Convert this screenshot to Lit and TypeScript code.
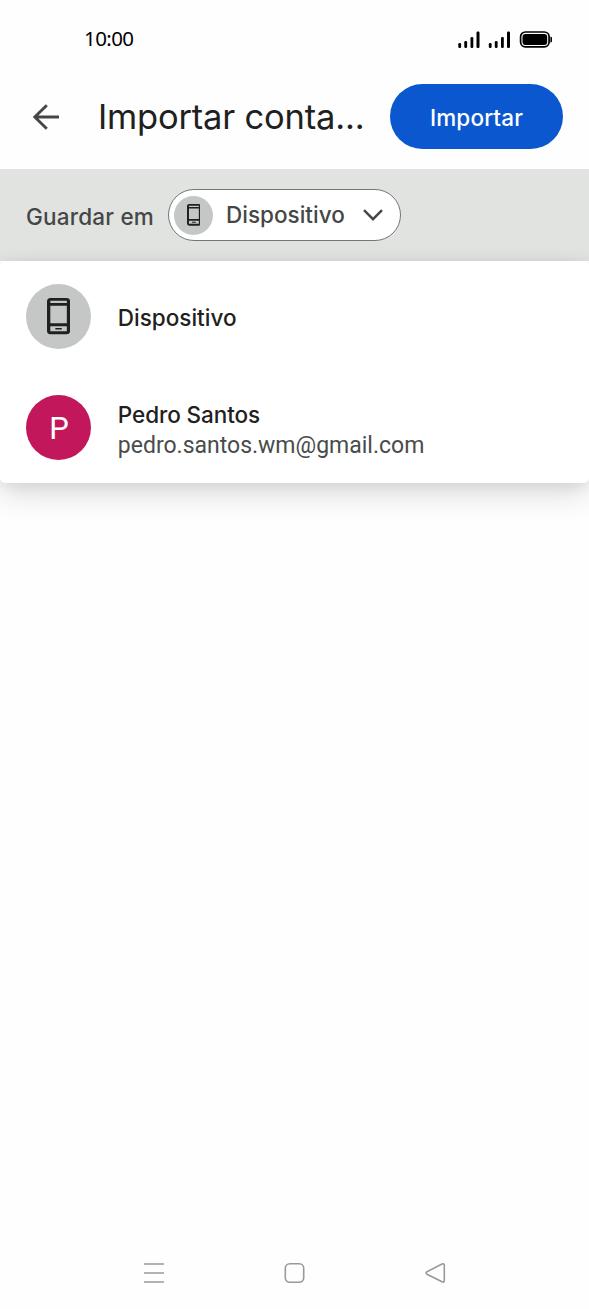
import { LitElement, html, css, svg } from "lit";
import { customElement, property } from "lit/decorators.js";

@customElement("phone-icon")
class PhoneIcon extends LitElement {
  static styles = css`
    :host { display: flex; align-items: center; justify-content: center; border-radius: 50%; background: #c5c7c6; }
    svg { display: block; height: 55.500%; }
  `;
  render() {
    return html`<svg viewBox="0 0 23 36">
      <path fill="#1f2120" fill-rule="evenodd" d="M3.500 0h16a3.500 3.500 0 0 1 3.500 3.500v29a3.500 3.500 0 0 1-3.500 3.500h-16a3.500 3.500 0 0 1-3.500-3.500v-29a3.500 3.500 0 0 1 3.500-3.500zM3.300 2.800v2.200h16.400v-2.200zM3.300 7.600v17.400h16.400v-17.400zM3.300 28v5h16.400v-5zM8.300 29.700h6.400v1.500h-6.400z" />
    </svg>`;
  }
}

@customElement("account-row")
class AccountRow extends LitElement {
  @property() name = "";
  @property() email = "";
  @property() initial = "";
  static styles = css`
    :host { display: flex; align-items: center; height: 111px; padding-left: 26px; gap: 26.500px; box-sizing: border-box; }
    .avatar { width: 65.300px; height: 65.300px; border-radius: 50%; flex: none; }
    .letter { background: #c2185b; color: #fff; display: flex; align-items: center; justify-content: center; font: 400 31px/65px Roboto, sans-serif; }
    .letter span { padding: 1px 0 0 1px; }
    .text { display: flex; flex-direction: column; padding-top: 2px; }
    .name { font: 450 22.500px/31px Inter, sans-serif; color: #1f2120; white-space: nowrap; }
    .email { font: 400 23px/31px Roboto, sans-serif; color: #4a4c4b; white-space: nowrap; }
    .pair { padding-top: 4px; }
    .pair .name { letter-spacing: -0.080px; }
  `;
  render() {
    return html`
      ${this.initial
        ? html`<div class="avatar letter"><span>${this.initial}</span></div>`
        : html`<phone-icon class="avatar"></phone-icon>`}
      <div class=${this.email ? "text pair" : "text"}>
        <div class="name">${this.name}</div>
        ${this.email ? html`<div class="email">${this.email}</div>` : null}
      </div>`;
  }
}

const signal = (x: number) => svg`
  <rect x=${x} y="12" width="2.800" height="5" rx="1.200" />
  <rect x=${x + 6} y="10" width="2.800" height="7" rx="1.200" />
  <rect x=${x + 12.2} y="6" width="2.800" height="11" rx="1.200" />
  <rect x=${x + 18.2} y="0.500" width="3" height="16.500" rx="1.200" />`;

@customElement("app-root")
class AppRoot extends LitElement {
  static styles = css`
    :host { display: flex; flex-direction: column; height: 1309px; background: #fefefe; font-family: Inter, sans-serif; overflow: hidden; }
    svg { display: block; flex: none; }
    .status { height: 65px; display: flex; justify-content: space-between; align-items: flex-start; box-sizing: border-box; padding: 25px 37px 0 84px; }
    .time { font: 400 20.500px/28px "Noto Sans", sans-serif; color: #000; letter-spacing: -0.600px; margin-top: -1px; }
    .status svg { margin-top: 6px; }
    .header { height: 104px; display: flex; align-items: center; box-sizing: border-box; padding: 0 26px 1px 32px; }
    .title { flex: 1; margin-left: 38px; padding-top: 1px; font-size: 34.500px; line-height: 48px; color: #1f2120; white-space: nowrap; letter-spacing: -0.200px; }
    .import { width: 173px; height: 65px; border: 0; padding: 1px 0 0; border-radius: 33px; background: #0b57d0; color: #fff; font: 450 22.500px/65px Inter, sans-serif; letter-spacing: 0.150px; flex: none; }
    .save { height: 92px; box-sizing: border-box; display: flex; align-items: center; padding-left: 26px; background: #e1e3e0; color: #454746; font-size: 22.500px; font-weight: 450; }
    .label { width: 141.500px; white-space: nowrap; padding-top: 2px; letter-spacing: 0.200px; }
    .chip { width: 233.500px; height: 52px; box-sizing: border-box; border: 1.800px solid #747775; border-radius: 26px; background: #fff; display: flex; align-items: center; padding-left: 5.500px; }
    .chip phone-icon { width: 39px; height: 39px; flex: none; }
    .chip span { width: 120px; margin: 0 17px 0 13px; white-space: nowrap; padding-bottom: 1px; }
    .menu { height: 222px; background: #fff; border-radius: 5px; position: relative; box-shadow: 0 12px 30px rgba(0,0,0,.13), 0 3px 14px rgba(0,0,0,.08); }
    .nav { margin-top: auto; height: 72px; display: flex; align-items: center; justify-content: space-between; padding: 0 143px; }
  `;
  render() {
    return html`
      <div class="status">
        <div class="time">10:00</div>
        <svg width="94" height="18" viewBox="0 0 94 18">
          ${signal(0.3)}${signal(30.8)}
          <rect x="62.600" y="1" width="28.500" height="14.800" rx="4.800" fill="none" stroke="#000" stroke-width="1.700" />
          <rect x="64.500" y="2.900" width="24.700" height="11" rx="3" />
          <path d="M92.400 5.500q1.600 0 1.600 1.500v3q0 1.500-1.600 1.500z" />
        </svg>
      </div>
      <div class="header">
        <svg width="28" height="28" viewBox="0 0 28 28" fill="none" stroke="#454746" stroke-width="2.900"><path d="M14.800 2.200L2.800 14L14.800 25.800M2.800 14H27" /></svg>
        <div class="title">Importar conta...</div>
        <button class="import">Importar</button>
      </div>
      <div class="save">
        <div class="label">Guardar em</div>
        <div class="chip">
          <phone-icon></phone-icon>
          <span>Dispositivo</span>
          <svg width="20" height="12" viewBox="0 0 20 12" fill="none" stroke="#454746" stroke-width="2.400"><path d="M1 1.200L10 10.200L19 1.200" /></svg>
        </div>
      </div>
      <div class="menu">
        <account-row name="Dispositivo"></account-row>
        <account-row name="Pedro Santos" email="pedro.santos.wm@gmail.com" initial="P"></account-row>
      </div>
      <div class="nav">
        <svg width="21" height="22" viewBox="0 0 21 22" stroke="#999" stroke-width="1.700"><path d="M1 2H21M1 11H21M1 20H21" /></svg>
        <svg width="21" height="22" viewBox="0 0 21 22" fill="none" stroke="#999" stroke-width="1.600"><rect x="1.300" y="1.800" width="18.400" height="18.400" rx="4.500" /></svg>
        <svg width="21" height="22" viewBox="0 0 21 22" fill="none" stroke="#999" stroke-width="1.600"><path d="M2 9.700L17 2Q19.300 1.200 19.300 3.500V18.500Q19.300 20.800 17 19.800L2 12.200Q.2 11 2 9.700Z" /></svg>
      </div>`;
  }
}
